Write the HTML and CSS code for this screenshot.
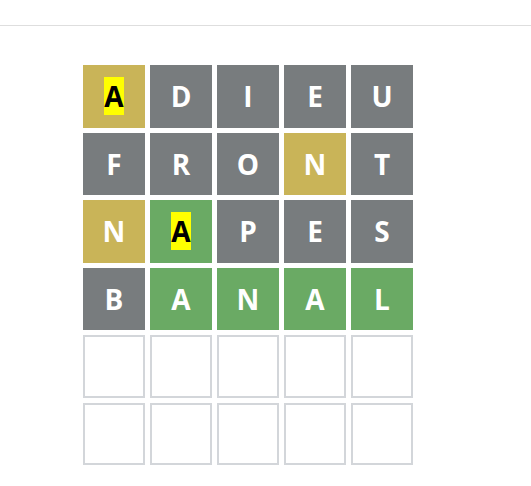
FILE: index.html
```html
<!DOCTYPE html>
<html lang="en">
<head>
    <meta charset="UTF-8">
    <meta name="viewport" content="width=device-width, initial-scale=1.0">
    <title>Wordle</title>
    <link rel="stylesheet" href="styles.css">
</head>
<body>
    <div class="header"></div>

    <div class="board-wrap">
        <div class="board">
            <div class="row">
                <div class="tile present"><mark>A</mark></div>
                <div class="tile absent">D</div>
                <div class="tile absent">I</div>
                <div class="tile absent">E</div>
                <div class="tile absent">U</div>
            </div>
            <div class="row">
                <div class="tile absent">F</div>
                <div class="tile absent">R</div>
                <div class="tile absent">O</div>
                <div class="tile present">N</div>
                <div class="tile absent">T</div>
            </div>
            <div class="row">
                <div class="tile present">N</div>
                <div class="tile correct"><mark>A</mark></div>
                <div class="tile absent">P</div>
                <div class="tile absent">E</div>
                <div class="tile absent">S</div>
            </div>
            <div class="row">
                <div class="tile absent">B</div>
                <div class="tile correct">A</div>
                <div class="tile correct">N</div>
                <div class="tile correct">A</div>
                <div class="tile correct">L</div>
            </div>
            <div class="row">
                <div class="tile"></div>
                <div class="tile"></div>
                <div class="tile"></div>
                <div class="tile"></div>
                <div class="tile"></div>
            </div>
            <div class="row">
                <div class="tile"></div>
                <div class="tile"></div>
                <div class="tile"></div>
                <div class="tile"></div>
                <div class="tile"></div>
            </div>
        </div>
    </div>
</body>
</html>
```

FILE: styles.css
```css
body {
    font-family: "Open Sans", "Liberation Sans", Arial, sans-serif;
    margin: 0;
    background-color: #fff;
}

.header {
    height: 25px;
    border-bottom: 1px solid #dedede;
}

.board-wrap {
    padding: 29px 0 0 73px;
}

.board {
    box-sizing: border-box;
    display: grid;
    grid-template-rows: repeat(6, 1fr);
    gap: 5px;
    width: 350px;
    height: 420px;
    padding: 10px;
}

.row {
    display: grid;
    grid-template-columns: repeat(5, 1fr);
    gap: 5px;
}

.tile {
    box-sizing: border-box;
    border: 2px solid #d3d6da;
    display: flex;
    align-items: center;
    justify-content: center;
    font-size: 28px;
    font-weight: 700;
    color: #fff;
    text-transform: uppercase;
}

.tile.absent {
    background-color: #787c7e;
    border-color: #787c7e;
}

.tile.present {
    background-color: #c9b458;
    border-color: #c9b458;
}

.tile.correct {
    background-color: #6aaa64;
    border-color: #6aaa64;
}

mark {
    background-color: #ffff00;
    color: #000;
}
```
